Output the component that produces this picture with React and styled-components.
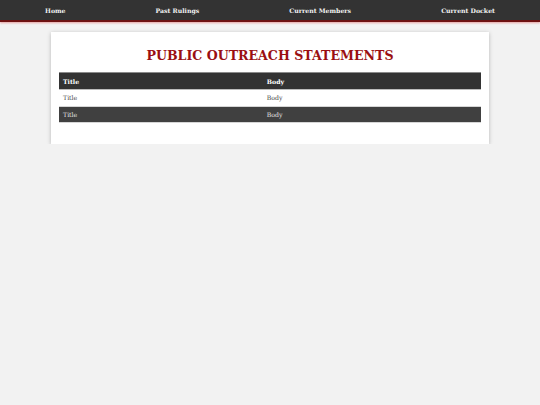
import React from 'react';
import styled, { createGlobalStyle } from 'styled-components';

const GlobalStyle = createGlobalStyle`
  body {
    margin: 0;
    background: #f2f2f2;
    font-family: 'DejaVu Serif', Georgia, serif;
  }
`;

const NavBar = styled.nav`
  display: flex;
  justify-content: space-around;
  align-items: center;
  height: 20px;
  background: #333333;
  border-bottom: 2px solid #6e1212;
  box-shadow: 0 1px 2px rgba(214, 60, 60, 0.45);
`;

const NavLink = styled.a`
  color: #f2f2f2;
  font-size: 6.2px;
  font-weight: bold;
  text-decoration: none;
  cursor: pointer;
`;

const Card = styled.section`
  width: 422px;
  margin: 10px auto 0;
  padding: 14px 8px 21px;
  background: #ffffff;
  box-shadow: 0 1px 4px rgba(0, 0, 0, 0.25);
`;

const Heading = styled.h1`
  margin: 0 0 6px;
  height: 20px;
  line-height: 20px;
  text-align: center;
  color: #9a0f12;
  font-size: 12.6px;
  font-weight: bold;
`;

const Table = styled.table`
  width: 100%;
  border-collapse: collapse;
  font-size: 6.2px;
`;

const Row = styled.tr`
  background: ${(p) => (p.$dark ? '#404040' : '#ffffff')};
  color: ${(p) => (p.$dark ? '#e6e6e6' : '#444444')};
  border-bottom: 1px solid #d6d6d6;
`;

const HeadRow = styled.tr`
  background: #333333;
  color: #ffffff;
  border-top: 1px solid #8a8a8a;
  border-bottom: 1px solid #bdbdbd;
`;

const Th = styled.th`
  width: ${(p) => p.$w};
  height: 16px;
  padding: 0 4px;
  text-align: left;
  font-weight: bold;
`;

const Td = styled.td`
  height: 15.5px;
  padding: 0 4px;
  text-align: left;
`;

const links = ['Home', 'Past Rulings', 'Current Members', 'Current Docket'];

const rows = [
  { title: 'Title', body: 'Body' },
  { title: 'Title', body: 'Body' }
];

const App = () => {
  return (
    <>
      <GlobalStyle />
      <NavBar>
        {links.map((l) => (
          <NavLink key={l}>{l}</NavLink>
        ))}
      </NavBar>
      <Card>
        <Heading>PUBLIC OUTREACH STATEMENTS</Heading>
        <Table>
          <thead>
            <HeadRow>
              <Th $w="48.3%">Title</Th>
              <Th>Body</Th>
            </HeadRow>
          </thead>
          <tbody>
            {rows.map((r, i) => (
              <Row key={i} $dark={i % 2 === 1}>
                <Td>{r.title}</Td>
                <Td>{r.body}</Td>
              </Row>
            ))}
          </tbody>
        </Table>
      </Card>
    </>
  );
};

export default App;
